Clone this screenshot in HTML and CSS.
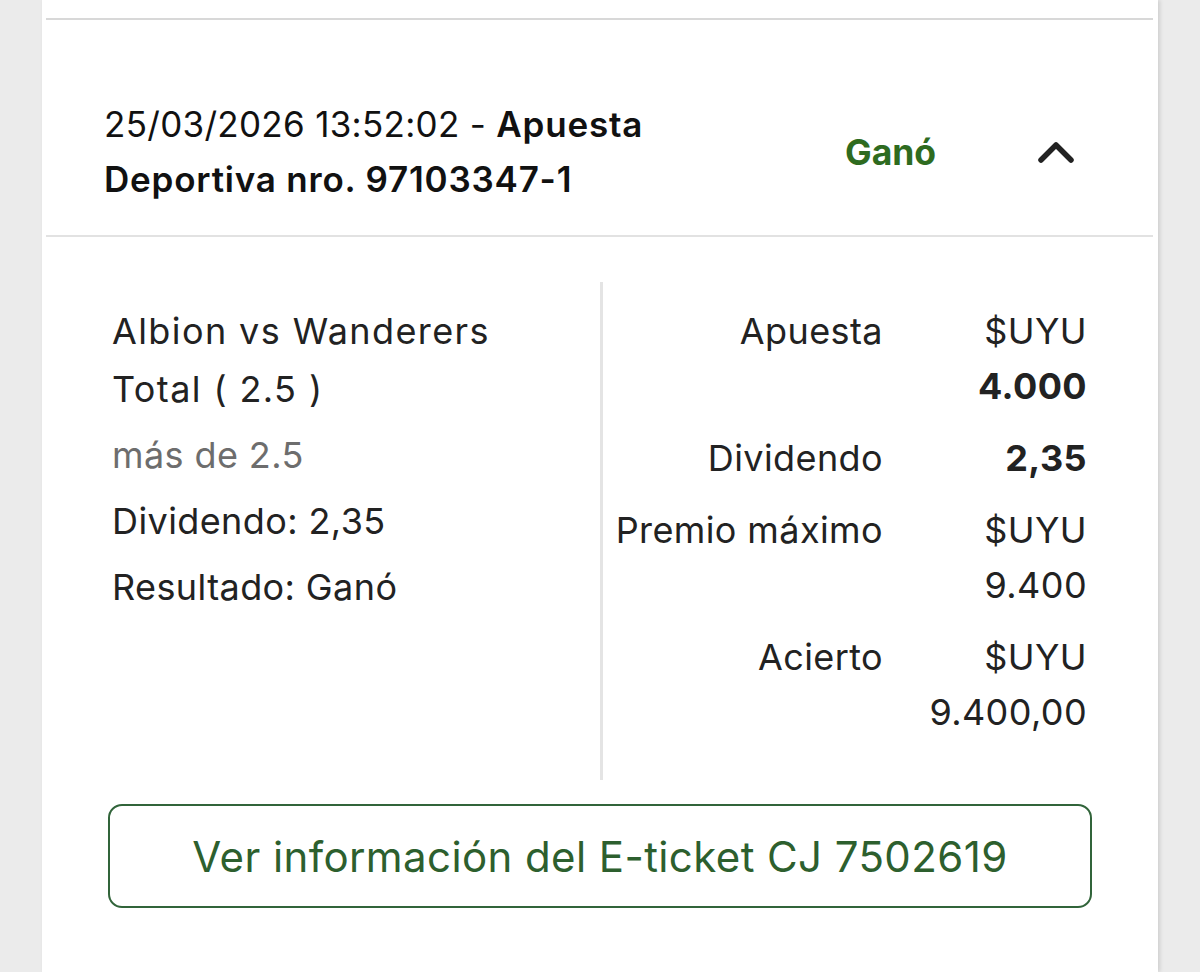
FILE: index.html
```html
<!DOCTYPE html>
<html lang="es">
<head>
    <meta charset="UTF-8">
    <meta name="viewport" content="width=device-width, initial-scale=1.0">
    <title>Mis apuestas</title>
    <link rel="stylesheet" href="styles.css">
</head>
<body>

    <div class="card">
        <div class="top-rule"></div>

        <div class="bet-header">
            <div class="bet-title">
                <span>25/03/2026 13:52:02 -</span> <strong>Apuesta Deportiva nro. 97103347-1</strong>
            </div>
            <div class="bet-status">Ganó</div>
            <button class="toggle-btn" aria-label="Contraer">
                <svg width="38" height="24" viewBox="0 0 38 24">
                    <polyline points="4,20 19,5 34,20" fill="none" stroke="#222" stroke-width="5.5" stroke-linecap="round" stroke-linejoin="round"/>
                </svg>
            </button>
        </div>

        <div class="bet-body">
            <div class="selection">
                <p class="event">Albion vs Wanderers<br>Total ( 2.5 )</p>
                <p class="muted">más de 2.5</p>
                <p>Dividendo: 2,35</p>
                <p>Resultado: Ganó</p>
            </div>

            <div class="summary">
                <div class="summary-label">Apuesta</div>
                <div class="summary-value">$UYU<br><strong>4.000</strong></div>

                <div class="summary-label">Dividendo</div>
                <div class="summary-value"><strong>2,35</strong></div>

                <div class="summary-label">Premio máximo</div>
                <div class="summary-value">$UYU<br>9.400</div>

                <div class="summary-label">Acierto</div>
                <div class="summary-value">$UYU<br>9.400,00</div>
            </div>
        </div>

        <button class="ticket-btn">Ver información del E-ticket CJ 7502619</button>
    </div>

</body>
</html>
```

FILE: styles.css
```css
body {
    font-family: Inter, "Noto Sans", Arial, sans-serif;
    background-color: #ebebeb;
    margin: 0;
    color: #222;
}
.card {
    margin: 0 42px;
    min-height: 972px;
    background: white;
    box-shadow: 2px 0 4px rgba(0, 0, 0, 0.12);
    overflow: hidden;
}
.top-rule {
    height: 2px;
    margin: 18px 5px 0 4px;
    background-color: #d8d8d8;
}
.bet-header {
    display: flex;
    align-items: center;
    margin: 0 5px 0 4px;
    padding: 77px 0 28px 58px;
    border-bottom: 2px solid #e2e2e2;
}
.bet-title {
    width: 580px;
    font-size: 35px;
    letter-spacing: 0.3px;
    line-height: 55px;
    color: #111;
}
.bet-title strong {
    font-weight: 600;
    letter-spacing: 0.8px;
}
.bet-status {
    margin-left: 161px;
    width: 92px;
    font-size: 35.5px;
    font-weight: 700;
    color: #2e6b1f;
}
.toggle-btn {
    margin-left: 100px;
    padding: 0;
    border: none;
    background: none;
    display: flex;
}
.bet-body {
    display: grid;
    grid-template-columns: 1fr 1fr;
    padding: 45px 71px 0 70px;
}
.selection {
    padding-top: 20px;
    font-size: 36px;
    letter-spacing: 0.4px;
    line-height: 58px;
}
.selection p {
    margin: 0 0 8px;
}
.selection .event {
    letter-spacing: 1.4px;
}
.selection .muted {
    color: #6d6d6d;
}
.summary {
    display: grid;
    grid-template-columns: 1fr 160px;
    column-gap: 44px;
    row-gap: 17px;
    align-content: start;
    border-left: 3px solid #e4e4e4;
    padding: 22px 0 40px;
    font-size: 36px;
    letter-spacing: 0.4px;
    line-height: 55px;
    text-align: right;
}
.summary strong {
    font-weight: 700;
}
.ticket-btn {
    display: block;
    width: calc(100% - 132px);
    height: 104px;
    margin: 24px 66px 0;
    border: 2px solid #31643a;
    border-radius: 14px;
    background: white;
    font-family: Inter, "Noto Sans", Arial, sans-serif;
    font-size: 42px;
    letter-spacing: 0.4px;
    color: #2d5f2e;
    cursor: pointer;
}
```
